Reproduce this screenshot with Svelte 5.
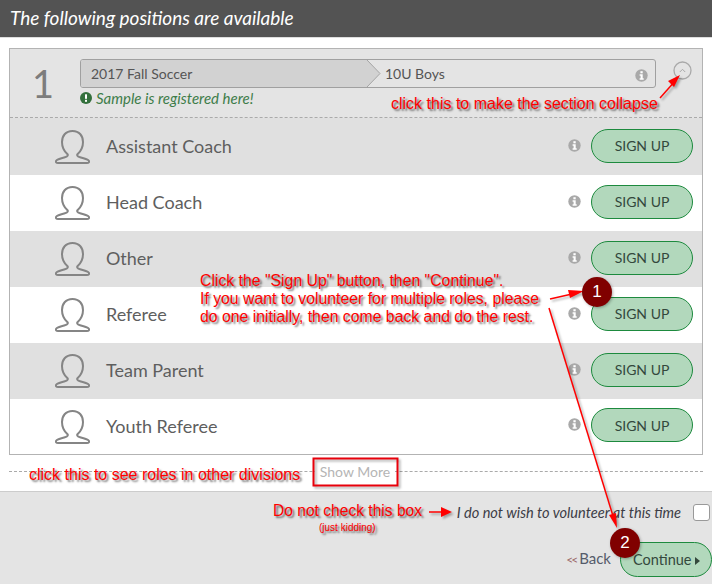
<script>
	const roles = ['Assistant Coach', 'Head Coach', 'Other', 'Referee', 'Team Parent', 'Youth Referee'];
</script>

{#snippet info(cls)}
	<svg class={cls} width="13" height="13" viewBox="0 0 13 13">
		<circle cx="6.5" cy="6.5" r="6.2" fill="#a9a9a9" />
		<rect x="5.4" y="2.2" width="2.3" height="2.1" fill="#fff" />
		<path d="M4.6 5.3h3.1v4h1v1.4H4.6V9.300h1V6.700h-1z" fill="#fff" />
	</svg>
{/snippet}

<div class="page">
	<header class="title">The following positions are available</header>

	<section class="panel">
		<div class="division">
			<div class="number">1</div>
			<div class="crumbs">
				<div class="crumb-bar">
					<div class="crumb first">2017 Fall Soccer</div>
					<svg class="chevron" width="14" height="27" viewBox="0 0 14 27">
						<path d="M0 0L13 13.500L0 27z" fill="#d2d2d2" />
						<path d="M0 0L13 13.500L0 27" fill="none" stroke="#a5a5a5" />
					</svg>
					<div class="crumb second">10U Boys</div>
					{@render info('crumb-info')}
				</div>
				<div class="registered">
					<svg width="12" height="12" viewBox="0 0 12 12">
						<circle cx="6" cy="6" r="6" fill="#33703c" />
						<rect x="5" y="2.300" width="2" height="4.500" fill="#fff" />
						<rect x="5" y="7.800" width="2" height="2" fill="#fff" />
					</svg>
					<em>Sample is registered here!</em>
				</div>
			</div>
			<svg class="collapse" width="19" height="19" viewBox="0 0 19 19">
				<circle cx="9.500" cy="9.500" r="8.500" fill="none" stroke="#a9a9a9" stroke-width="1.300" />
				<path d="M6.800 11L9.500 8.300L12.200 11" fill="none" stroke="#a9a9a9" />
			</svg>
		</div>

		{#each roles as role, i}
			<div class="role" class:shaded={i % 2 === 0}>
				<svg class="person" width="35" height="34" viewBox="0 0 35 34">
					<path
						d="M17.500 1C10.500 1 7 6 7 12C7 17 9.500 21.500 12.300 24C13.500 25.300 12.500 26.300 10.500 27C6.500 28.300 2.500 29 1.300 30.500C0.300 32 1.300 33 3 33H32C33.700 33 34.700 32 33.700 30.500C32.500 29 28.500 28.300 24.500 27C22.500 26.300 21.500 25.300 22.700 24C25.500 21.500 28 17 28 12C28 6 24.500 1 17.500 1Z"
						fill="none"
						stroke="#858585"
						stroke-width="2"
					/>
				</svg>
				<span class="role-name">{role}</span>
				{@render info('role-info')}
				<button class="pill sign-up">SIGN UP</button>
			</div>
		{/each}
	</section>

	<div class="more">
		<span class="show-more">Show More</span>
	</div>

	<footer class="foot">
		<div class="decline">
			<em>I do not wish to volunteer at this time</em>
			<span class="checkbox"></span>
		</div>
		<div class="nav">
			<span class="back"><span class="chev">&lt;&lt;</span>Back</span>
			<button class="pill continue">Continue <i class="caret"></i></button>
		</div>
	</footer>

	<!-- annotations drawn on top of the screenshot -->
	<svg class="arrows" width="712" height="584" viewBox="0 0 712 584">
		<g fill="none" stroke="#f00" stroke-width="1.500">
			<line x1="660" y1="98" x2="676" y2="80" />
			<line x1="550" y1="299" x2="572" y2="294" />
			<line x1="429" y1="512" x2="444" y2="512" />
			<line x1="549" y1="308" x2="613" y2="516" />
		</g>
		<g fill="#f00">
			<path d="M680 75L674 87L668 81z" />
			<path d="M584 291L570 298L568 290z" />
			<path d="M452 512L441 507V517z" />
			<path d="M617 528L609 515L616 513z" />
		</g>
		<rect x="313.500" y="458.500" width="84" height="27" fill="none" stroke="#e8000b" stroke-width="2" />
	</svg>

	<div class="note collapse-note">click this to make the section collapse</div>
	<div class="note click-note">Click the "Sign Up" button, then "Continue".<br />If you want to volunteer for multiple roles, please<br />do one initially, then come back and do the rest.</div>
	<div class="note roles-note">click this to see roles in other divisions</div>
	<div class="note box-note">Do not check this box</div>
	<div class="note kidding">(just kidding)</div>
	<div class="badge one">1</div>
	<div class="badge two">2</div>
</div>

<style>
	:global(body) {
		margin: 0;
		background: #fff;
	}
	.page {
		position: relative;
		width: 712px;
		height: 584px;
		overflow: hidden;
		display: flex;
		flex-direction: column;
		font-family: Lato, sans-serif;
		color: #555;
	}
	.title {
		height: 37px;
		line-height: 35px;
		padding-left: 10px;
		background: #535353;
		border-bottom: 1px solid #ddd;
		color: #fff;
		font-size: 19px;
		font-style: italic;
		flex: none;
	}
	.panel {
		margin: 10px 9px 0;
		border: 1px solid #b3b3b3;
		flex: none;
	}
	.division {
		height: 68px;
		background: #e4e4e4;
		border-bottom: 1px dashed #aaa;
		display: flex;
		align-items: flex-start;
	}
	.number {
		width: 70px;
		padding-left: 22px;
		box-sizing: border-box;
		padding-top: 12px;
		font-size: 38px;
		line-height: 44px;
		color: #7d7d7d;
	}
	.crumbs {
		width: 576px;
		padding-top: 10px;
	}
	.crumb-bar {
		position: relative;
		display: flex;
		border: 1px solid #a0a0a0;
		border-radius: 3px;
		box-sizing: border-box;
		height: 29px;
		font-size: 14px;
		color: #555;
		line-height: 27px;
	}
	.crumb.first {
		width: 286px;
		padding-left: 10px;
		box-sizing: border-box;
		background: #d2d2d2;
		border-radius: 2px 0 0 2px;
	}
	.chevron {
		flex: none;
		margin-right: 4px;
	}
	.crumb.second {
		flex: 1;
	}
	.crumb-info {
		margin: 9px 7px 0 0;
	}
	.registered {
		display: flex;
		align-items: center;
		gap: 4px;
		margin-top: 2px;
		font-size: 15px;
		line-height: 16px;
		color: #3e7d4a;
	}
	.collapse {
		margin: 12px 0 0 17px;
	}
	.role {
		height: 56px;
		box-sizing: border-box;
		display: flex;
		align-items: center;
		background: #fff;
		padding: 0 9px 0 45px;
	}
	.division + .role {
		height: 57px;
		padding-top: 1px;
	}
	.role:last-child {
		height: 55px;
	}
	.role.shaded {
		background: #e0e0e0;
	}
	.person {
		flex: none;
	}
	.role-name {
		margin: -2px 0 0 16px;
		font-size: 18px;
		flex: 1;
		color: #5e5e5e;
	}
	.role-info {
		margin: -4px 10px 0 0;
	}
	.pill {
		border: 1px solid #1d8a3e;
		background: #b2d8bc;
		font-family: Lato, sans-serif;
		color: #34483c;
		padding: 0;
		cursor: pointer;
	}
	.sign-up {
		width: 102px;
		height: 34px;
		border-radius: 17px;
		font-size: 14px;
		margin-top: -3px;
	}
	.more {
		height: 36px;
		margin: 0 9px;
		position: relative;
		display: flex;
		justify-content: center;
		align-items: center;
		flex: none;
	}
	.more::before {
		content: '';
		position: absolute;
		left: 0;
		right: 0;
		top: 16px;
		border-top: 1px dashed #aaa;
	}
	.show-more {
		position: relative;
		top: -2px;
		left: -1px;
		background: #fff;
		padding: 0 5px;
		font-size: 14px;
		color: #b5b5b5;
	}
	.foot {
		flex: 1;
		background: #e4e4e4;
		border-top: 1px solid #ccc;
		display: flex;
		flex-direction: column;
		align-items: flex-end;
	}
	.decline {
		display: flex;
		align-items: center;
		margin-top: 12px;
		font-size: 14.600px;
		color: #3c3c46;
	}
	.checkbox {
		width: 15px;
		height: 15px;
		margin: 0 2px 0 12px;
		background: #fff;
		border: 1px solid #999;
		border-radius: 3px;
		display: block;
	}
	.nav {
		display: flex;
		align-items: center;
		margin-top: 21px;
		font-size: 15px;
	}
	.back {
		margin: -3px 9px 0 0;
		color: #555b6a;
	}
	.chev {
		color: #9c6a6a;
		font-size: 12px;
		letter-spacing: -2px;
		margin-right: 3px;
	}
	.continue {
		width: 92px;
		height: 35px;
		border-radius: 17.500px;
		font-size: 14.500px;
		text-align: left;
		padding-left: 12px;
	}
	.caret {
		display: inline-block;
		border-left: 5px solid #34483c;
		border-top: 4px solid transparent;
		border-bottom: 4px solid transparent;
	}
	.arrows {
		position: absolute;
		left: 0;
		top: 0;
		pointer-events: none;
		filter: drop-shadow(2px 2px 1px rgba(0, 0, 0, 0.3));
	}
	.note {
		position: absolute;
		font-family: 'Liberation Sans', Arial, sans-serif;
		color: #f00;
		font-size: 16px;
		line-height: 18px;
		white-space: nowrap;
		text-shadow: 2px 2px 2px rgba(0, 0, 0, 0.55);
	}
	.collapse-note {
		left: 391px;
		top: 95px;
	}
	.click-note {
		left: 200px;
		top: 272px;
		font-size: 15.800px;
	}
	.roles-note {
		left: 29px;
		top: 466px;
	}
	.box-note {
		left: 273px;
		top: 502px;
		font-size: 15.600px;
	}
	.kidding {
		left: 319px;
		top: 521px;
		font-size: 10px;
		line-height: 14px;
	}
	.badge {
		position: absolute;
		width: 30px;
		height: 30px;
		border-radius: 50%;
		background: #800000;
		color: #fff;
		text-align: center;
		font-family: 'Liberation Sans', Arial, sans-serif;
		font-size: 17px;
		line-height: 30px;
		box-shadow: 1px 1px 3px rgba(0, 0, 0, 0.3);
	}
	.one {
		left: 582px;
		top: 277px;
	}
	.two {
		left: 610px;
		top: 528px;
	}
</style>
